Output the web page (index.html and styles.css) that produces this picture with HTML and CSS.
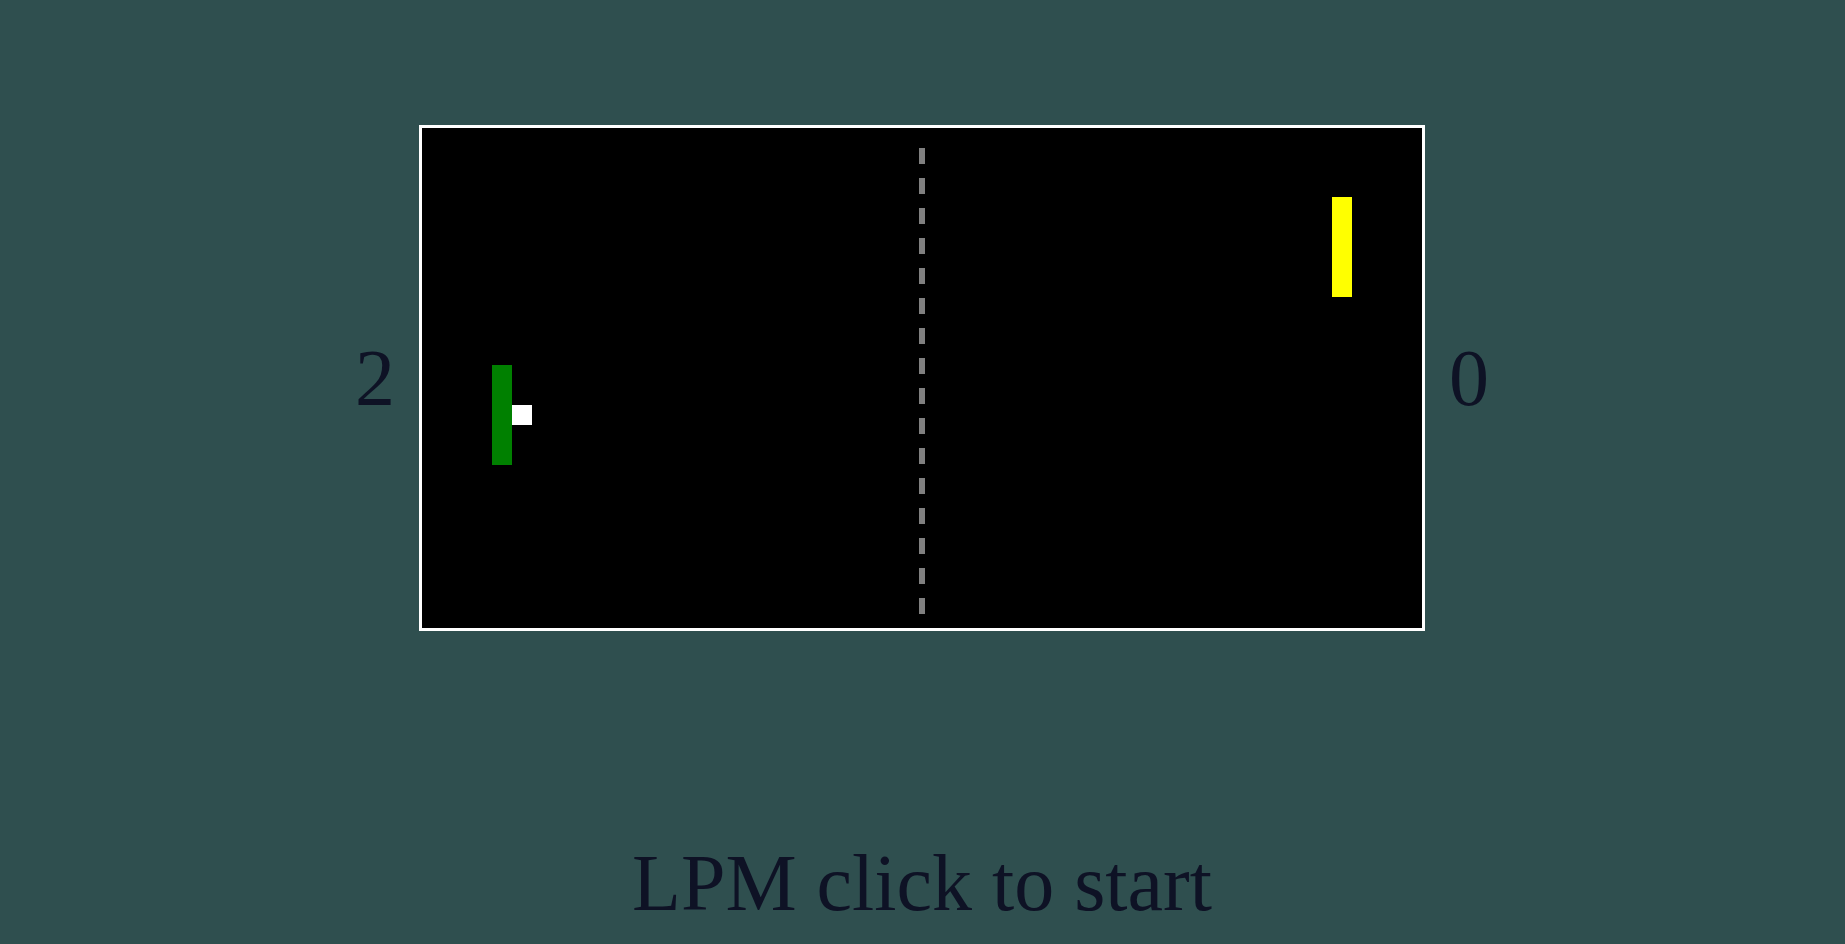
FILE: index.html
```html
<!DOCTYPE html>
<html lang="en">
<head>
<meta charset="utf-8">
<title>Pong</title>
<link rel="stylesheet" href="styles.css">
</head>
<body>
<main class="game">
  <div class="arena">
    <div class="score">2</div>
    <div class="board">
      <div class="net"></div>
      <div class="paddle paddle-left"></div>
      <div class="ball"></div>
      <div class="paddle paddle-right"></div>
    </div>
    <div class="score">0</div>
  </div>
  <p class="hint">LPM click to start</p>
</main>
</body>
</html>
```
FILE: styles.css
```css
html, body {
  margin: 0;
  padding: 0;
}
body {
  background: #2f4f4f;
  font-family: "Liberation Serif", "Times New Roman", serif;
  color: #0e1225;
  overflow: hidden;
}
.game {
  display: flex;
  flex-direction: column;
  align-items: center;
  padding: 125px 1px 0 0;
  height: 819px;
}
.arena {
  display: flex;
  align-items: center;
  gap: 24px;
}
.score {
  font-size: 80px;
  width: 40px;
  text-align: center;
}
.board {
  position: relative;
  width: 1000px;
  height: 500px;
  background: #000;
  border: 3px solid #fff;
}
.net {
  position: absolute;
  left: 497px;
  top: 20px;
  width: 6px;
  height: 466px;
  background: repeating-linear-gradient(to bottom, #808080 0 16px, transparent 16px 30px);
}
.paddle {
  position: absolute;
  width: 20px;
  height: 100px;
}
.paddle-left {
  left: 70px;
  top: 237px;
  background: #008000;
}
.paddle-right {
  left: 910px;
  top: 69px;
  background: #ffff00;
}
.ball {
  position: absolute;
  left: 90px;
  top: 277px;
  width: 20px;
  height: 20px;
  background: #fff;
}
.hint {
  margin: 206px 0 0;
  font-size: 80px;
  line-height: 92px;
}
```
